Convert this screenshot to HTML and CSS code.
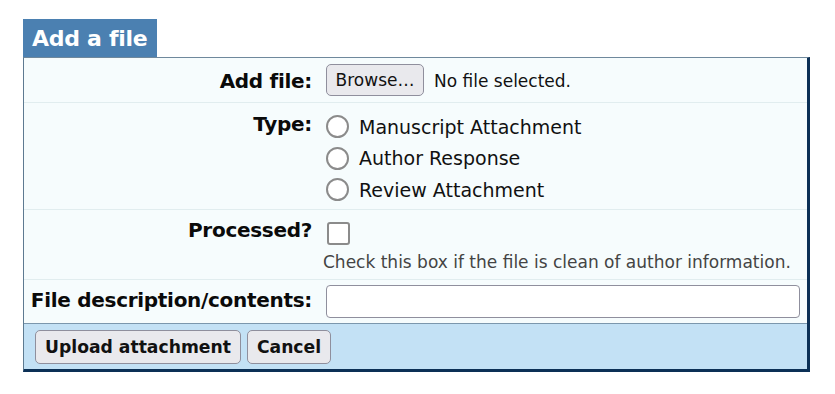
FILE: index.html
```html
<!DOCTYPE html>
<html>
<head>
<meta charset="utf-8">
<link rel="stylesheet" href="styles.css">
</head>
<body>
<div class="panel">
  <div class="tab">Add a file</div>
  <div class="box">
    <div class="row row-file">
      <div class="label">Add file:</div>
      <div class="field file-field">
        <button class="btn browse" type="button">Browse…</button>
        <span class="file-status">No file selected.</span>
      </div>
    </div>
    <div class="row row-type">
      <div class="label">Type:</div>
      <div class="field radios">
        <label class="opt"><input type="radio" name="type" class="radio"><span>Manuscript Attachment</span></label>
        <label class="opt"><input type="radio" name="type" class="radio"><span>Author Response</span></label>
        <label class="opt"><input type="radio" name="type" class="radio"><span>Review Attachment</span></label>
      </div>
    </div>
    <div class="row row-processed">
      <div class="label">Processed?</div>
      <div class="field processed">
        <input type="checkbox" class="check">
        <div class="hint">Check this box if the file is clean of author information.</div>
      </div>
    </div>
    <div class="row row-desc">
      <div class="label">File description/contents:</div>
      <div class="field"><input type="text" class="text-input"></div>
    </div>
    <div class="footer">
      <button class="btn action" type="button">Upload attachment</button>
      <button class="btn action" type="button">Cancel</button>
    </div>
  </div>
</div>
</body>
</html>
```
FILE: styles.css
```css
html, body {
  margin: 0;
  padding: 0;
  background: #ffffff;
}
body {
  font-family: "DejaVu Sans", Verdana, sans-serif;
  color: #111111;
}
.panel {
  padding: 19px 0 0 23px;
  width: 787px;
}
.tab {
  display: inline-block;
  background: #4b80b1;
  color: #ffffff;
  font-weight: bold;
  font-size: 22px;
  line-height: 36px;
  height: 36px;
  padding: 2px 10px 0 9px;
  letter-spacing: -0.3px;
}
.box {
  border-left: 1px solid #5d7a91;
  border-top: 1px solid #6f889c;
  border-right: 3px solid #0c3056;
  border-bottom: 3px solid #0c3056;
  background: #f6fcfd;
}
.row {
  display: grid;
  grid-template-columns: 302px 1fr;
  border-bottom: 1px solid #e1edef;
}
.label {
  text-align: right;
  padding-right: 14px;
  font-weight: bold;
  font-size: 20px;
  color: #0a0a0a;
  letter-spacing: -0.3px;
  white-space: nowrap;
}
.field {
  font-size: 19px;
  color: #111;
}
.row-file {
  height: 44px;
  align-items: center;
}
.row-file .label {
  padding-top: 2px;
}
.file-field {
  display: flex;
  align-items: center;
  gap: 10px;
}
.btn {
  font-family: "DejaVu Sans", Verdana, sans-serif;
  background: #e9e9ed;
  border: 1px solid #8f8f9d;
  border-radius: 5px;
  color: #111;
  padding: 0;
  margin: 0;
}
.browse {
  width: 98px;
  height: 32px;
  font-size: 17px;
}
.file-status {
  font-size: 17px;
  padding-top: 2px;
}
.row-type {
  height: 106px;
  align-items: start;
}
.row-type .label {
  padding-top: 9px;
}
.radios {
  display: flex;
  flex-direction: column;
  padding-top: 8px;
}
.opt {
  display: flex;
  align-items: center;
  height: 31.5px;
  gap: 10px;
}
.radio {
  appearance: none;
  -webkit-appearance: none;
  margin: 0;
  width: 23px;
  height: 23px;
  border: 2px solid #8b8b8b;
  border-radius: 50%;
  background: #ffffff;
  box-sizing: border-box;
}
.row-processed {
  height: 69px;
  align-items: start;
}
.row-processed .label {
  padding-top: 8px;
}
.processed {
  padding-top: 12px;
}
.check {
  appearance: none;
  -webkit-appearance: none;
  display: block;
  margin: 0 0 0 1px;
  width: 23px;
  height: 23px;
  border: 2px solid #8b8b8b;
  border-radius: 3px;
  background: #ffffff;
  box-sizing: border-box;
}
.hint {
  font-size: 17px;
  color: #444;
  margin-top: 7px;
  margin-left: -3px;
  white-space: nowrap;
}
.row-desc {
  height: 43px;
  align-items: center;
  border-bottom: 1px solid #7b97ad;
}
.row-desc .label {
  padding-bottom: 3px;
}
.text-input {
  display: block;
  box-sizing: border-box;
  width: 474px;
  height: 33px;
  border: 1px solid #8f8f9d;
  border-radius: 4px;
  background: #ffffff;
  margin: 0;
}
.footer {
  background: #c3e1f5;
  height: 45px;
  display: flex;
  align-items: center;
  gap: 6px;
  padding-left: 11px;
}
.action {
  height: 34px;
  padding: 0 9px;
  font-weight: bold;
  font-size: 17.2px;
}
```
